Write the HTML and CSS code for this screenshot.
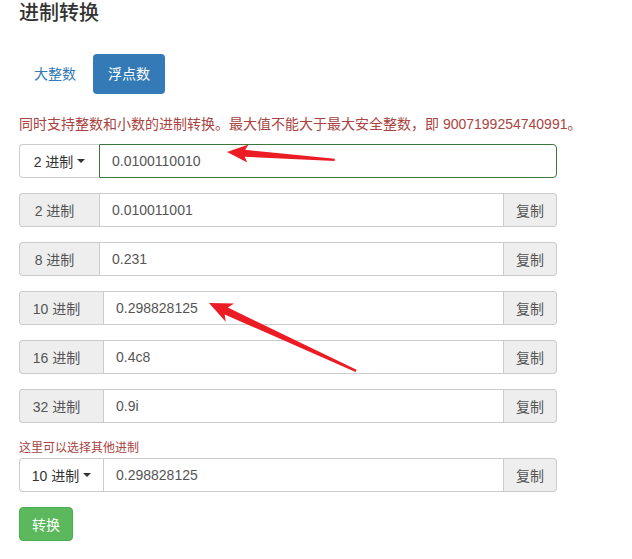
FILE: index.html
```html
<!DOCTYPE html>
<html lang="zh-CN">
<head>
<meta charset="utf-8">
<title>进制转换</title>
<link rel="stylesheet" href="styles.css">
</head>
<body>
<div class="page">
  <h3 class="title">进制转换</h3>
  <ul class="tabs">
    <li class="tab">大整数</li>
    <li class="tab active">浮点数</li>
  </ul>
  <p class="note">同时支持整数和小数的进制转换。最大值不能大于最大安全整数，即 9007199254740991。</p>

  <div class="group">
    <button class="dd">2 进制 <span class="caret"></span></button>
    <input class="field ok" value="0.0100110010">
  </div>
  <div class="group">
    <span class="addon">2 进制</span>
    <input class="field" value="0.010011001" readonly>
    <button class="copy">复制</button>
  </div>
  <div class="group">
    <span class="addon">8 进制</span>
    <input class="field" value="0.231" readonly>
    <button class="copy">复制</button>
  </div>
  <div class="group">
    <span class="addon wide">10 进制</span>
    <input class="field" value="0.298828125" readonly>
    <button class="copy">复制</button>
  </div>
  <div class="group">
    <span class="addon wide">16 进制</span>
    <input class="field" value="0.4c8" readonly>
    <button class="copy">复制</button>
  </div>
  <div class="group">
    <span class="addon wide">32 进制</span>
    <input class="field" value="0.9i" readonly>
    <button class="copy">复制</button>
  </div>

  <p class="hint">这里可以选择其他进制</p>
  <div class="group">
    <button class="dd wide">10 进制 <span class="caret"></span></button>
    <input class="field" value="0.298828125" readonly>
    <button class="copy">复制</button>
  </div>

  <button class="go">转换</button>
</div>

<svg class="marks" width="632" height="559" viewBox="0 0 632 559">
  <polygon class="arrow" transform="translate(227 152) rotate(4.2)" points="0,0 21,-9 18,-3.5 108,-1.2 108,1.2 18,3.5 21,9"/>
  <polygon class="arrow" transform="translate(209 303) rotate(24.8)" points="0,0 23,-10 19,-3.8 162,-1.2 162,1.2 19,3.8 23,10"/>
</svg>
</body>
</html>
```
FILE: styles.css
```css
html, body {
  margin: 0;
  padding: 0;
}
body {
  position: relative;
  width: 632px;
  height: 559px;
  overflow: hidden;
  background: #fff;
  font-family: "Liberation Sans", "Noto Sans CJK SC", sans-serif;
  font-size: 14px;
  color: #333;
}
.page {
  padding: 0 19px;
}
.title {
  margin: 0;
  font-size: 20px;
  font-weight: 500;
  line-height: 26px;
  color: #333;
}
.tabs {
  display: flex;
  gap: 2px;
  list-style: none;
  margin: 28px 0 20px;
  padding: 0;
}
.tab {
  padding: 10px 15px;
  line-height: 20px;
  border-radius: 4px;
  color: #337ab7;
}
.tab.active {
  background: #337ab7;
  color: #fff;
}
.note {
  margin: 0 0 10px;
  line-height: 20px;
  color: #a94442;
  white-space: nowrap;
}
.hint {
  margin: 0;
  font-size: 12px;
  line-height: 20px;
  color: #a94442;
}
.group {
  display: flex;
  width: 538px;
  height: 34px;
  margin-bottom: 15px;
}
.addon,
.dd {
  box-sizing: border-box;
  width: 80px;
  height: 34px;
  border: 1px solid #ccc;
  border-right: 0;
  border-radius: 4px 0 0 4px;
  display: flex;
  align-items: center;
  justify-content: center;
  font: inherit;
  white-space: nowrap;
}
.addon {
  background: #eee;
  color: #555;
  padding: 0 10px 0 0;
}
.dd {
  background: #fff;
  color: #333;
  padding: 0;
  gap: 4px;
}
.wide {
  width: 84px;
}
.caret {
  display: inline-block;
  width: 0;
  height: 0;
  border-top: 4px solid #333;
  border-left: 4px solid transparent;
  border-right: 4px solid transparent;
}
.field {
  flex: 1;
  min-width: 0;
  box-sizing: border-box;
  height: 34px;
  margin: 0;
  border: 1px solid #ccc;
  border-radius: 0;
  padding: 6px 12px;
  font: inherit;
  color: #555;
  background: #fff;
  outline: none;
}
.field.ok {
  border-color: #3c763d;
  border-radius: 0 4px 4px 0;
}
.copy {
  box-sizing: border-box;
  width: 53px;
  height: 34px;
  margin: 0;
  border: 1px solid #ccc;
  border-left: 0;
  border-radius: 0 4px 4px 0;
  background: #eee;
  color: #555;
  font: inherit;
  padding: 0;
}
.go {
  box-sizing: border-box;
  height: 34px;
  padding: 6px 12px;
  line-height: 20px;
  border: 1px solid #4cae4c;
  border-radius: 4px;
  background: #5cb85c;
  color: #fff;
  font: inherit;
}
.marks {
  position: absolute;
  top: 0;
  left: 0;
  pointer-events: none;
}
.arrow {
  fill: #ec1c24;
}
```
